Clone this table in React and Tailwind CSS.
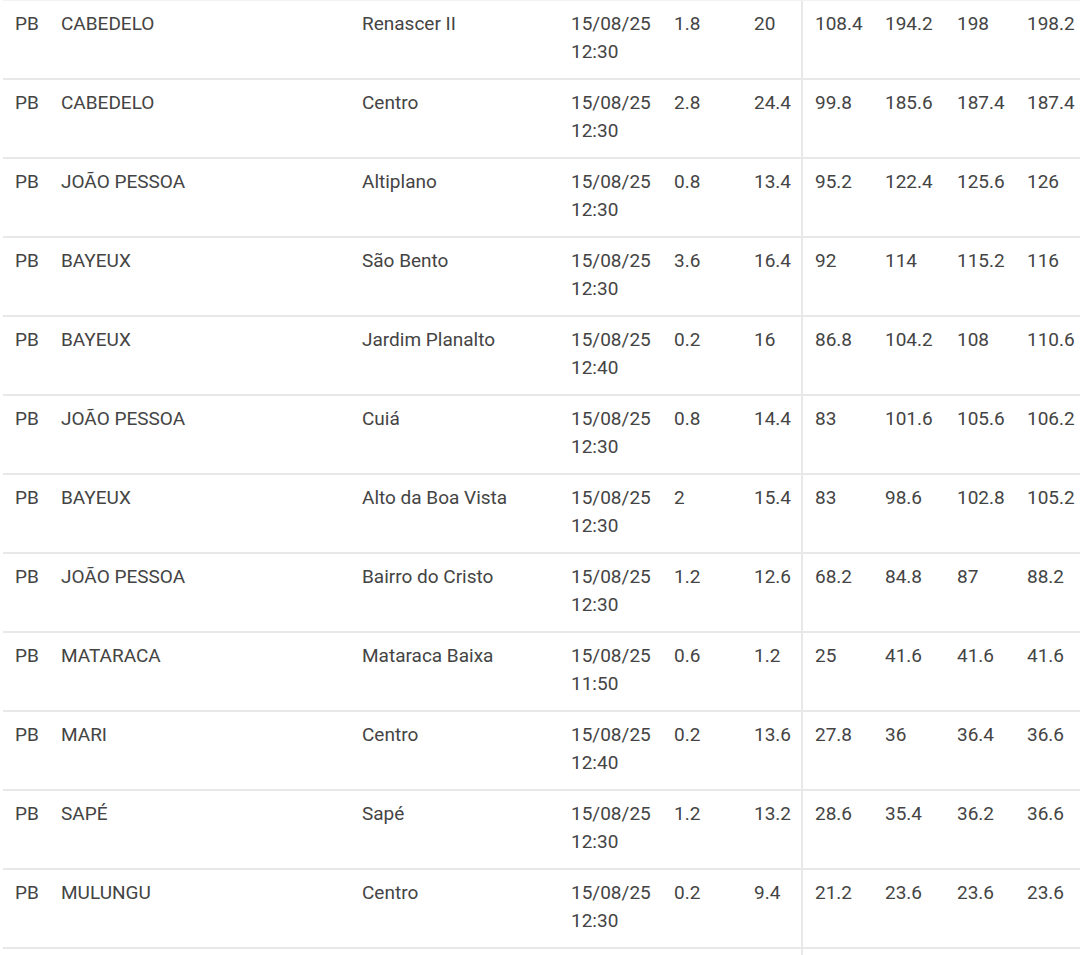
const rows = [
  ['PB', 'CABEDELO', 'Renascer II', '15/08/25 12:30', '1.8', '20', '108.4', '194.2', '198', '198.2'],
  ['PB', 'CABEDELO', 'Centro', '15/08/25 12:30', '2.8', '24.4', '99.8', '185.6', '187.4', '187.4'],
  ['PB', 'JOÃO PESSOA', 'Altiplano', '15/08/25 12:30', '0.8', '13.4', '95.2', '122.4', '125.6', '126'],
  ['PB', 'BAYEUX', 'São Bento', '15/08/25 12:30', '3.6', '16.4', '92', '114', '115.2', '116'],
  ['PB', 'BAYEUX', 'Jardim Planalto', '15/08/25 12:40', '0.2', '16', '86.8', '104.2', '108', '110.6'],
  ['PB', 'JOÃO PESSOA', 'Cuiá', '15/08/25 12:30', '0.8', '14.4', '83', '101.6', '105.6', '106.2'],
  ['PB', 'BAYEUX', 'Alto da Boa Vista', '15/08/25 12:30', '2', '15.4', '83', '98.6', '102.8', '105.2'],
  ['PB', 'JOÃO PESSOA', 'Bairro do Cristo', '15/08/25 12:30', '1.2', '12.6', '68.2', '84.8', '87', '88.2'],
  ['PB', 'MATARACA', 'Mataraca Baixa', '15/08/25 11:50', '0.6', '1.2', '25', '41.6', '41.6', '41.6'],
  ['PB', 'MARI', 'Centro', '15/08/25 12:40', '0.2', '13.6', '27.8', '36', '36.4', '36.6'],
  ['PB', 'SAPÉ', 'Sapé', '15/08/25 12:30', '1.2', '13.2', '28.6', '35.4', '36.2', '36.6'],
  ['PB', 'MULUNGU', 'Centro', '15/08/25 12:30', '0.2', '9.4', '21.2', '23.6', '23.6', '23.6'],
];

export default function App() {
  return (
    <div
      className="min-h-[955px] w-[1080px] overflow-hidden bg-white pl-[3px] text-[19px] leading-[28px] text-[#444444]"
      style={{ fontFamily: 'Roboto, "Liberation Sans", sans-serif' }}
    >
      <div className="border-t border-[#f2f2f2]">
        {rows.map((r, i) => (
          <div
            key={i}
            className="grid h-[79px] grid-cols-[46px_301px_209px_103px_80px_59px_72px_72px_70px_1fr] border-b-2 border-[#e8e8e8]"
          >
            <div className="whitespace-nowrap pl-[12px] pt-[9px]">{r[0]}</div>
            <div className="whitespace-nowrap pl-[12px] pt-[9px]">{r[1]}</div>
            <div className="whitespace-nowrap pl-[12px] pt-[9px]">{r[2]}</div>
            <div className="pl-[12px] pt-[9px]">{r[3]}</div>
            <div className="whitespace-nowrap pl-[12px] pt-[9px]">{r[4]}</div>
            <div className="whitespace-nowrap pl-[12px] pt-[9px]">{r[5]}</div>
            <div className="whitespace-nowrap border-l-2 border-[#e8e8e8] pl-[12px] pt-[9px]">{r[6]}</div>
            <div className="whitespace-nowrap pl-[12px] pt-[9px]">{r[7]}</div>
            <div className="whitespace-nowrap pl-[12px] pt-[9px]">{r[8]}</div>
            <div className="whitespace-nowrap pl-[12px] pt-[9px]">{r[9]}</div>
          </div>
        ))}
        <div className="grid h-[20px] grid-cols-[46px_301px_209px_103px_80px_59px_72px_72px_70px_1fr]">
          <div className="col-span-6" />
          <div className="border-l-2 border-[#e8e8e8]" />
        </div>
      </div>
    </div>
  );
}
